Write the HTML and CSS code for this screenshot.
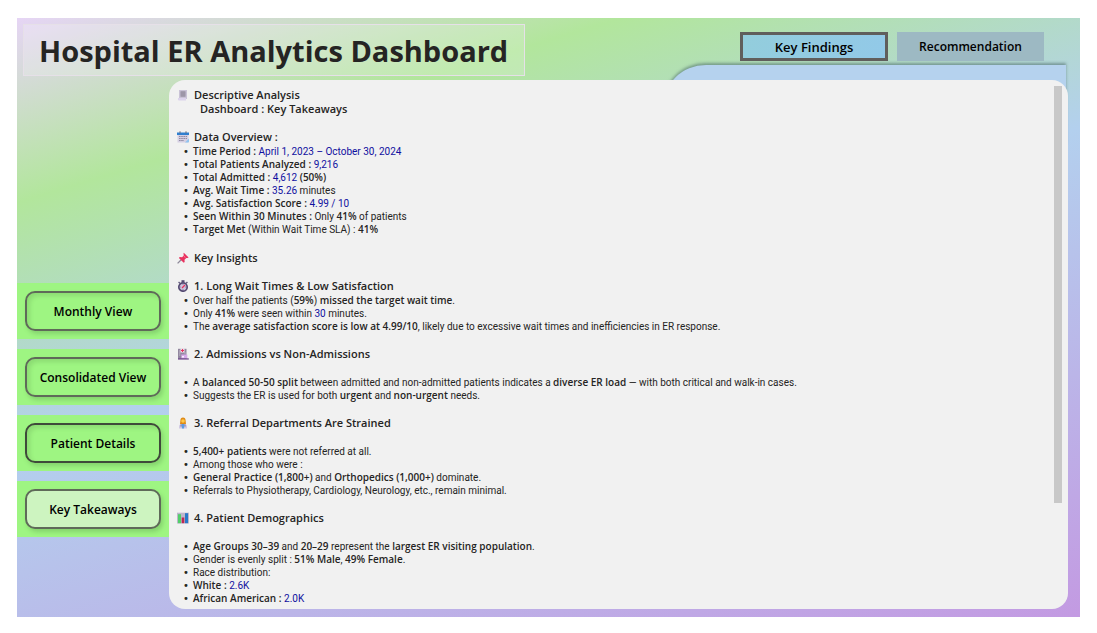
FILE: index.html
```html
<!DOCTYPE html>
<html lang="en">
<head>
<meta charset="utf-8">
<meta name="viewport" content="width=device-width, initial-scale=1">
<title>Hospital ER Analytics Dashboard</title>
<link rel="stylesheet" href="styles.css">
</head>
<body>
<div class="canvas">
  <div class="backdrop"></div>
  <header class="header">
    <h1 class="title">Hospital ER Analytics Dashboard</h1>
    <div class="tabs">
      <button class="tab tab-active" type="button">Key Findings</button>
      <button class="tab" type="button">Recommendation</button>
    </div>
  </header>
  <div class="main">
    <nav class="sidebar" aria-label="Pages">
      <div class="band"><button class="nav-button" type="button">Monthly View</button></div>
      <div class="band"><button class="nav-button" type="button">Consolidated View</button></div>
      <div class="band"><button class="nav-button nav-dark" type="button">Patient Details</button></div>
      <div class="band"><button class="nav-button nav-current" type="button">Key Takeaways</button></div>
    </nav>
    <main class="report">
      <div class="report-text">
        <section>
          <h2 class="heading"><svg class="icon" viewBox="0 0 12 12"><path d="M2 1h8v9H2z" fill="#c9c2d6"/><path d="M3.5 2h5v6h-5z" fill="#a59eb0"/><path d="M3.5 4h5M3.5 6h5" stroke="#8b8498" stroke-width=".6"/><path d="M1 9h8v2.5H2A1 1 0 0 1 1 10z" fill="#dcd3ec"/></svg>Descriptive Analysis</h2>
          <p class="heading subheading">Dashboard : Key Takeaways</p>
        </section>
        <section>
          <h2 class="heading"><svg class="icon" viewBox="0 0 12 12"><path d="M.5 3h11v8.500H.5z" fill="#d5cfe3"/><path d="M0 1.500h12V4H0z" fill="#2f7fd0"/><path d="M3 .3v2M9 .3v2" stroke="#667" stroke-width="1"/><path d="M2 5.500h8M2 7.500h8M2 9.500h5" stroke="#8f8ba2" stroke-width="1.100" stroke-dasharray="1.600 .6"/><path d="M8 11.500l4-4v3a1 1 0 0 1-1 1z" fill="#8fc3ef"/></svg>Data Overview :</h2>
          <ul class="list list-long">
            <li><b>Time Period :</b> <span class="value">April 1, 2023 – October 30, 2024</span></li>
            <li><b>Total Patients Analyzed :</b> <span class="value">9,216</span></li>
            <li><b>Total Admitted :</b> <span class="value">4,612</span> <b>(50%)</b></li>
            <li><b>Avg. Wait Time :</b> <span class="value">35.26</span> minutes</li>
            <li><b>Avg. Satisfaction Score :</b> <span class="value">4.99 / 10</span></li>
            <li><b>Seen Within 30 Minutes :</b> Only <b>41%</b> of patients</li>
            <li><b>Target Met</b> (Within Wait Time SLA) : <b>41%</b></li>
          </ul>
        </section>
        <section>
          <h2 class="heading"><svg class="icon" viewBox="0 0 12 12"><path d="M5 7L.6 11.4" stroke="#8c8798" stroke-width="1.300"/><path d="M6.800.8l4.800 4.600-1 .7-1.200-.2-1.900 1.800.2 2.400-1 .7L1.900 6l.8-1 2.400.2L7 3.200l-.6-1.300z" fill="#e8325f"/><path d="M6.500 3.800l2 1.900" stroke="#ff7f97" stroke-width="1"/></svg>Key Insights</h2>
        </section>
        <section>
          <h2 class="heading"><svg class="icon" viewBox="0 0 12 12"><path d="M4.500.2h3v2h-3z" fill="#554b73"/><path d="M1.600 2l1.300 1.300M10.400 2L9.100 3.300" stroke="#554b73" stroke-width="1.200"/><circle cx="6" cy="7" r="4.200" fill="#cdc3dc" stroke="#554b73" stroke-width="1.700"/><path d="M5 8l3-3" stroke="#e8325f" stroke-width="1.200"/><path d="M6 4v.8M6 9.200v.8M3.200 7h.8M8 7h.8" stroke="#79708f" stroke-width=".8"/></svg>1. Long Wait Times &amp; Low Satisfaction</h2>
          <ul class="list">
            <li>Over half the patients (<b>59%</b>) <b>missed the target wait time</b>.</li>
            <li>Only <b>41%</b> were seen within <span class="value">30</span> minutes.</li>
            <li>The <b>average satisfaction score is low at 4.99/10</b>, likely due to excessive wait times and inefficiencies in ER response.</li>
          </ul>
        </section>
        <section>
          <h2 class="heading"><svg class="icon" viewBox="0 0 12 12"><path d="M1 .8h8.500V11H1z" fill="#92879f"/><path d="M2.300 3h1M2.300 5h1M2.300 7h1M7.500 5h1" stroke="#d9d4e2" stroke-width="1"/><path d="M3.500.5h4v4h-4z" fill="#f3e7f1"/><path d="M5.500 1v3M4 2.500h3" stroke="#e8325f" stroke-width="1.200"/><path d="M4.300 6.500h6v4h-6z" fill="#d6a9e8"/><path d="M1 10.300h10.800v1.300H1z" fill="#724a8e"/><path d="M5 8h2v1.500H5z" fill="#f7effd"/></svg>2. Admissions vs Non-Admissions</h2>
          <ul class="list list-spaced">
            <li>A <b>balanced 50-50 split</b> between admitted and non-admitted patients indicates a <b>diverse ER load</b> — with both critical and walk-in cases.</li>
            <li>Suggests the ER is used for both <b>urgent</b> and <b>non-urgent</b> needs.</li>
          </ul>
        </section>
        <section>
          <h2 class="heading"><svg class="icon" viewBox="0 0 12 12"><path d="M3.400 3.500a2.600 2.900 0 0 1 5.200 0l.4 3.500H3z" fill="#df8b16"/><circle cx="6" cy="4" r="1.800" fill="#ffc94a"/><path d="M2 11.600V9.500C2 7.700 3.500 7 6 7s4 .7 4 2.500v2.100z" fill="#cfc8e2"/><path d="M4.600 7h2.800L7 11.600H5z" fill="#5b9ce2"/><path d="M4 7.300v2.300M8 7.300v2.300" stroke="#69619a" stroke-width=".8"/></svg>3. Referral Departments Are Strained</h2>
          <ul class="list list-spaced">
            <li><b>5,400+ patients</b> were not referred at all.</li>
            <li>Among those who were :</li>
            <li><b>General Practice (1,800+)</b> and <b>Orthopedics (1,000+)</b> dominate.</li>
            <li>Referrals to Physiotherapy, Cardiology, Neurology, etc., remain minimal.</li>
          </ul>
        </section>
        <section>
          <h2 class="heading"><svg class="icon" viewBox="0 0 12 12"><path d="M0 .7h12v10.800H0z" fill="#bdb6cb"/><path d="M1 2.200h3v9H1z" fill="#51cf69"/><path d="M4.700 5.500h2.600v5.700H4.700z" fill="#bd2853"/><path d="M8 1.200h3v10H8z" fill="#2879c9"/></svg>4. Patient Demographics</h2>
          <ul class="list list-spaced">
            <li><b>Age Groups 30–39</b> and <b>20–29</b> represent the <b>largest ER visiting population</b>.</li>
            <li>Gender is evenly split : <b>51% Male</b>, <b>49% Female</b>.</li>
            <li>Race distribution:</li>
            <li><b>White :</b> <span class="value">2.6K</span></li>
            <li><b>African American :</b> <span class="value">2.0K</span></li>
          </ul>
        </section>
      </div>
      <div class="track"><div class="thumb"></div></div>
    </main>
  </div>
</div>
</body>
</html>
```
FILE: styles.css
```css
* {
  box-sizing: border-box;
}

body {
  margin: 0;
  padding: 18px 17px 16px;
  min-height: 100vh;
  display: flex;
  background: #ffffff;
  color: #252423;
  font-family: "Open Sans", "Noto Sans", sans-serif;
}

.canvas {
  position: relative;
  flex: 1;
  display: flex;
  flex-direction: column;
  padding: 0 12px 8px 0;
  background: linear-gradient(163deg, #e6d5f5 0%, #b2e69c 20%, #b3d0ee 47%, #c39ae2 100%);
}

/* Blue sheet showing above the report */
.backdrop {
  position: absolute;
  top: 47px;
  right: 14px;
  width: 38%;
  height: 80px;
  border-radius: 44px 0 0 0;
  background: #b5d2ee;
  box-shadow: 0 -2px 3px rgba(70, 100, 100, 0.55);
}

.header {
  position: relative;
  display: flex;
  justify-content: space-between;
  align-items: flex-start;
  height: 62px;
  padding: 6px 24px 0 6px;
}

.title {
  margin: 0;
  padding: 1px 16px 0 15px;
  border: 1px solid #e6e0e8;
  background: rgba(255, 255, 255, 0.2);
  font-size: 29px;
  line-height: 49px;
  font-weight: 700;
  white-space: nowrap;
}

.tabs {
  display: flex;
  gap: 9px;
  padding-top: 8px;
}

.tab {
  width: 147px;
  height: 29px;
  padding: 0;
  border: 0;
  background: #9db9c3;
  color: #000000;
  font: 600 12px "Open Sans", "Noto Sans", sans-serif;
}

.tab-active {
  width: 148px;
  border: 3px solid #605e5c;
  background: linear-gradient(100deg, #93cddc, #92c9e8);
  font-size: 13px;
}

.main {
  position: relative;
  flex: 1;
  display: grid;
  grid-template-columns: 152px 1fr;
}

.sidebar {
  display: flex;
  flex-direction: column;
  justify-content: flex-end;
  gap: 10px;
  padding-bottom: 72px;
}

.band {
  padding: 8px;
  background: #9ef582;
}

.nav-button {
  display: block;
  width: 100%;
  height: 40px;
  padding: 0;
  border: 2px solid #5f6a59;
  border-radius: 10px;
  background: transparent;
  box-shadow: 2px 3px 4px rgba(60, 110, 50, 0.25), inset 3px 3px 4px rgba(60, 110, 50, 0.18);
  color: #000000;
  font: 600 12px "Open Sans", "Noto Sans", sans-serif;
}

.nav-dark {
  border-color: #3f4a3a;
}

.nav-current {
  background: #cdf4c0;
  box-shadow: 2px 3px 4px rgba(60, 110, 50, 0.25);
}

.report {
  display: flex;
  justify-content: space-between;
  padding: 6px 6px 2px 8px;
  border-radius: 16px;
  background: #f1f1f1;
}

.report-text {
  display: flex;
  flex-direction: column;
  gap: 14px;
  padding-top: 2px;
}

.heading {
  display: flex;
  align-items: center;
  gap: 5px;
  margin: 0;
  font-size: 11px;
  line-height: 14px;
  font-weight: 600;
}

.subheading {
  padding-left: 23px;
}

.icon {
  width: 12px;
  height: 12px;
}

.list {
  margin: 0;
  padding: 1px 0 0 16px;
  list-style: none;
  font-family: Roboto, "Open Sans", sans-serif;
  font-size: 10px;
  line-height: 13px;
}

.list-long {
  margin-bottom: 1px;
}

.list-spaced {
  padding-top: 15px;
}

.list li {
  height: 13px;
}

.list li::before {
  content: "•";
  float: left;
  margin-left: -10px;
  font-family: "DejaVu Sans", sans-serif;
}

.list b {
  font-family: "Open Sans", "Noto Sans", sans-serif;
  font-weight: 600;
}

.value {
  color: #1010a0;
}

.track {
  width: 8px;
}

.thumb {
  height: 80%;
  background: #c8c8c8;
}
```
